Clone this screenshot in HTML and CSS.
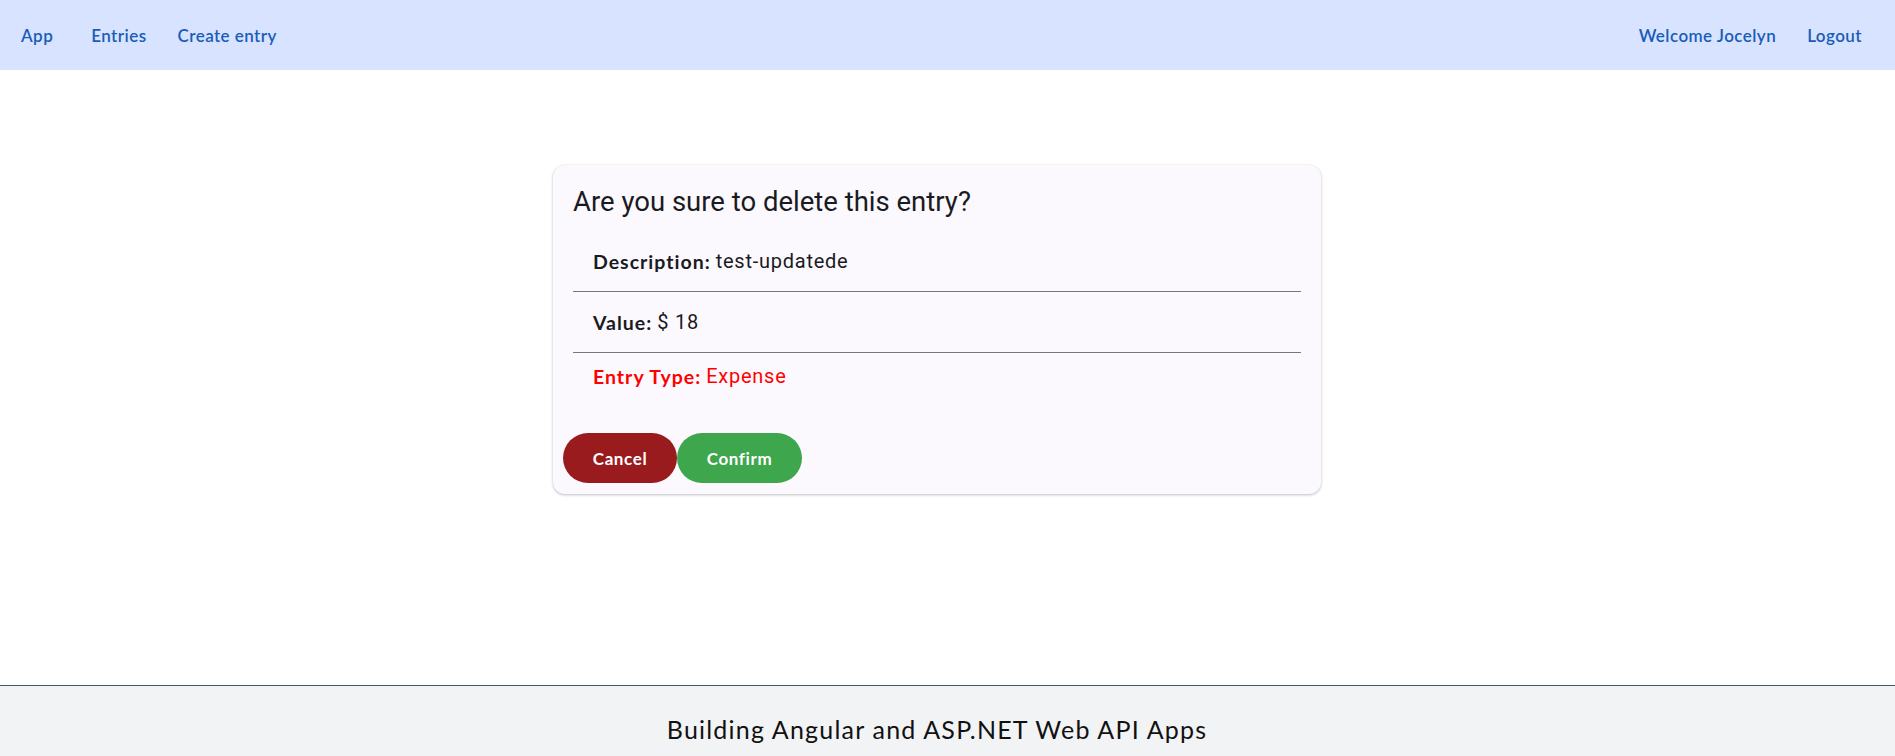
FILE: index.html
```html
<!DOCTYPE html>
<html lang="en">
<head>
<meta charset="utf-8">
<title>Delete entry</title>
<link rel="stylesheet" href="styles.css">
</head>
<body>
<header class="topbar">
  <nav class="nav-left">
    <a class="nav-link brand" href="#">App</a>
    <a class="nav-link" href="#">Entries</a>
    <a class="nav-link" href="#">Create entry</a>
  </nav>
  <nav class="nav-right">
    <a class="nav-link" href="#">Welcome Jocelyn</a>
    <a class="nav-link" href="#">Logout</a>
  </nav>
</header>
<main class="main">
  <section class="card">
    <h2 class="card-title">Are you sure to delete this entry?</h2>
    <ul class="detail-list">
      <li class="detail-item"><span class="label">Description:</span> <span class="value">test-updatede</span></li>
      <li class="detail-item"><span class="label">Value:</span> <span class="value">$ 18</span></li>
      <li class="detail-item last expense"><span class="label">Entry Type:</span> <span class="value">Expense</span></li>
    </ul>
    <div class="actions">
      <button class="btn btn-cancel">Cancel</button>
      <button class="btn btn-confirm">Confirm</button>
    </div>
  </section>
</main>
<footer class="footer">
  <p class="footer-text">Building Angular and ASP.NET Web API Apps</p>
</footer>
</body>
</html>
```
FILE: styles.css
```css
* { box-sizing: border-box; }
html, body { height: 100%; }
body {
  margin: 0;
  min-height: 100vh;
  display: flex;
  flex-direction: column;
  background: #ffffff;
  font-family: "Lato", "Noto Sans", sans-serif;
  color: #1a1b1f;
}
.topbar {
  height: 70px;
  background: #d7e3ff;
  display: flex;
  align-items: center;
  justify-content: space-between;
  padding: 0 33px 0 21px;
}
.nav-left, .nav-right { display: flex; align-items: center; }
.nav-link {
  color: #1a5cb8;
  text-decoration: none;
  font-size: 17px;
  font-weight: 600;
  letter-spacing: 0.45px;
}
.nav-left .nav-link + .nav-link { margin-left: 31px; }
.nav-left .brand { margin-right: 7px; }
.nav-right .nav-link + .nav-link { margin-left: 31px; }
.main {
  flex: 1;
  display: flex;
  justify-content: center;
  align-items: flex-start;
  padding: 95px 21px 0 0;
}
.card {
  width: 768px;
  background: #fbf9fe;
  border-radius: 12px;
  box-shadow: 0 1px 3px rgba(0,0,0,0.25), 0 0 1px rgba(0,0,0,0.08);
  padding: 21px 20px 11px 10px;
}
.card-title {
  margin: 0 0 13px 10px;
  font-family: "Roboto", sans-serif;
  font-weight: 400;
  font-size: 27.5px;
  line-height: 32px;
  color: #1a1b1f;
}
.detail-list {
  list-style: none;
  margin: 0 0 34px 10px;
  padding: 0;
}
.detail-item {
  height: 61px;
  display: flex;
  align-items: center;
  padding-left: 20px;
  border-bottom: 1px solid #74777f;
}
.detail-item.last {
  height: 46px;
  border-bottom: none;
}
.label {
  font-size: 19.5px;
  font-weight: 700;
  letter-spacing: 1px;
  color: #1a1b1f;
  margin-right: 5px;
}
.value {
  font-family: "Roboto", sans-serif;
  font-size: 20px;
  letter-spacing: 0.75px;
  color: #1a1b1f;
}
.expense .label, .expense .value { color: #ff0000; }
.actions { display: flex; }
.btn {
  height: 50px;
  border: none;
  border-radius: 25px;
  color: #ffffff;
  font-family: "Lato", sans-serif;
  font-size: 17px;
  font-weight: 700;
  letter-spacing: 0.6px;
  padding: 0;
  cursor: pointer;
}
.btn-cancel { background: #9a1b1e; width: 114px; }
.btn-confirm { background: #3ea64c; width: 125px; }
.footer {
  height: 71px;
  border-top: 1px solid #4b5563;
  background: #f2f3f5;
  display: flex;
  align-items: center;
  justify-content: center;
  padding: 16px 21px 0 0;
}
.footer-text {
  margin: 0;
  font-size: 25px;
  letter-spacing: 1.2px;
  color: #111111;
}
```
